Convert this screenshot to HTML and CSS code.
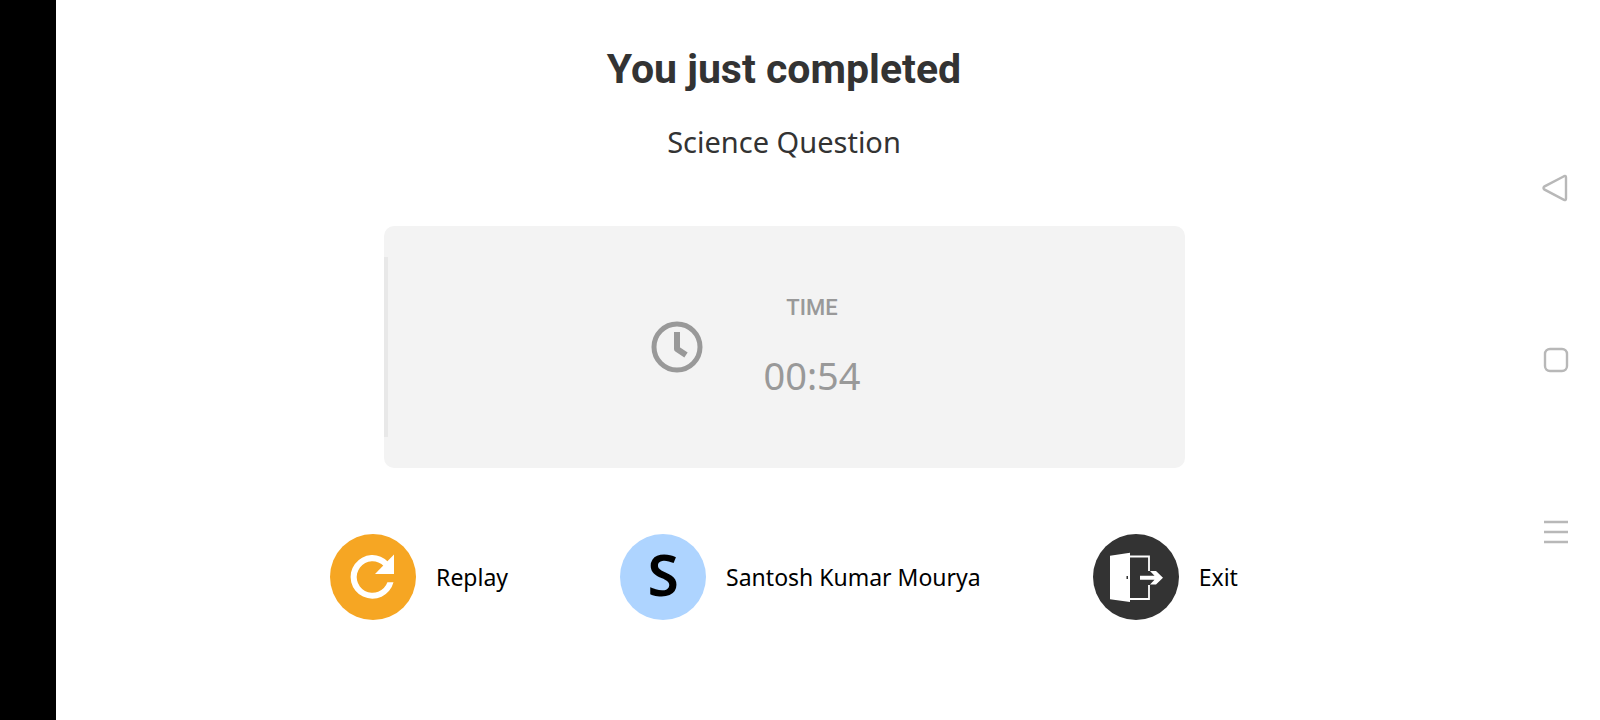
FILE: index.html
```html
<!DOCTYPE html>
<html lang="en">
<head>
    <meta charset="UTF-8">
    <meta name="viewport" content="width=device-width, initial-scale=1.0">
    <title>Science Question</title>
    <link rel="stylesheet" href="styles.css">
</head>
<body>
    <div class="notch"></div>

    <main class="result">
        <h1>You just completed</h1>
        <p class="quiz-name">Science Question</p>

        <!-- Time card -->
        <section class="card">
            <div class="card-inner">
                <svg class="clock" width="52" height="52" viewBox="0 0 52 52" fill="none" stroke="#999">
                    <circle cx="26" cy="26" r="23" stroke-width="5"/>
                    <path d="M26 11V28L35 34" stroke-width="6" stroke-linejoin="round"/>
                </svg>
                <div class="time">
                    <h2>TIME</h2>
                    <p>00:54</p>
                </div>
            </div>
        </section>

        <!-- Actions -->
        <div class="actions">
            <button class="action" type="button">
                <svg class="circle replay" viewBox="0 0 86 86">
                    <path d="M58.500 28.200A21.800 21.800 0 1 0 63.500 48.300H57.400A15.800 15.800 0 1 1 54 32.200Z" fill="#fff"/>
                    <path d="M64 20.500V40H45Z" fill="#fff"/>
                </svg>
                <span>Replay</span>
            </button>
            <button class="action" type="button">
                <span class="circle avatar">S</span>
                <span>Santosh Kumar Mourya</span>
            </button>
            <button class="action" type="button">
                <svg class="circle exit" viewBox="0 0 86 86">
                    <path d="M17 21.700L37 18.700V68L17 65.300Z" fill="#fff"/>
                    <path d="M37 22.500H56V37M56 51V65H37" fill="none" stroke="#fff" stroke-width="1.800"/>
                    <path d="M47 41.800H61.500L57 37H63L70 43.700L63 50.500H57L61.500 45.700H47Z" fill="#fff"/>
                    <rect x="33.500" y="42" width="1.500" height="3" fill="#333"/>
                </svg>
                <span>Exit</span>
            </button>
        </div>
    </main>

    <!-- System navigation -->
    <nav class="system-nav">
        <button type="button" aria-label="Back">
            <svg width="28" height="28" viewBox="0 0 28 28">
                <path d="M22 2.200L2.200 12.600Q0.800 14 2.200 15.400L22 25.800Q24 26.600 24 24.500V3.500Q24 1.400 22 2.200Z"/>
            </svg>
        </button>
        <button type="button" aria-label="Home">
            <svg width="28" height="28" viewBox="0 0 28 28">
                <rect x="3" y="3" width="22" height="22" rx="5"/>
            </svg>
        </button>
        <button type="button" aria-label="Recent apps">
            <svg width="28" height="28" viewBox="0 0 28 28">
                <path d="M2 4H26M2 14H26M2 24H26"/>
            </svg>
        </button>
    </nav>
</body>
</html>
```
FILE: styles.css
```css
* {
    box-sizing: border-box;
}
body {
    margin: 0;
    min-height: 100vh;
    display: flex;
    background: #fff;
    color: #333;
    font-family: "Noto Sans", sans-serif;
}
h1, h2, p {
    margin: 0;
}
button {
    background: none;
    border: none;
    padding: 0;
    font: inherit;
    color: inherit;
    cursor: pointer;
}
.notch {
    width: 56px;
    background: #000;
}
.result {
    flex: 1;
    display: flex;
    flex-direction: column;
    align-items: center;
    padding: 45px 24px;
}
h1 {
    font-family: Roboto, sans-serif;
    font-size: 41px;
    line-height: 48px;
}
.quiz-name {
    margin-top: 28px;
    font-size: 29px;
    line-height: 42px;
}
.card {
    width: 100%;
    max-width: 801px;
    margin-top: 63px;
    padding: 31px 0;
    background: #f3f3f3;
    border-radius: 10px;
    color: #999;
}
.card-inner {
    height: 180px;
    display: flex;
    align-items: center;
    justify-content: center;
    gap: 60px;
    padding-right: 60px;
    border-left: 4px solid #e8e8e8;
}
.time {
    text-align: center;
}
.time h2 {
    font-family: Roboto, sans-serif;
    font-size: 22px;
    font-weight: 500;
    line-height: 28px;
}
.time p {
    margin-top: 28px;
    font-size: 38px;
    line-height: 50px;
}
.actions {
    display: flex;
    flex-wrap: wrap;
    justify-content: center;
    gap: 112px;
    margin-top: 66px;
}
.action {
    display: flex;
    align-items: center;
    gap: 20px;
    color: #000;
    font-size: 23px;
    line-height: 34px;
}
.circle {
    width: 86px;
    height: 86px;
    border-radius: 50%;
}
.replay {
    background: #f6a623;
}
.avatar {
    display: flex;
    align-items: center;
    justify-content: center;
    padding-bottom: 6px;
    background: #aed4ff;
    font-size: 57px;
    font-weight: 600;
}
.exit {
    background: #333;
}
.system-nav {
    width: 88px;
    display: flex;
    flex-direction: column;
    align-items: center;
    justify-content: center;
    gap: 144px;
}
.system-nav svg {
    display: block;
    fill: none;
    stroke: #b8b8b8;
    stroke-width: 2.4;
}
```
